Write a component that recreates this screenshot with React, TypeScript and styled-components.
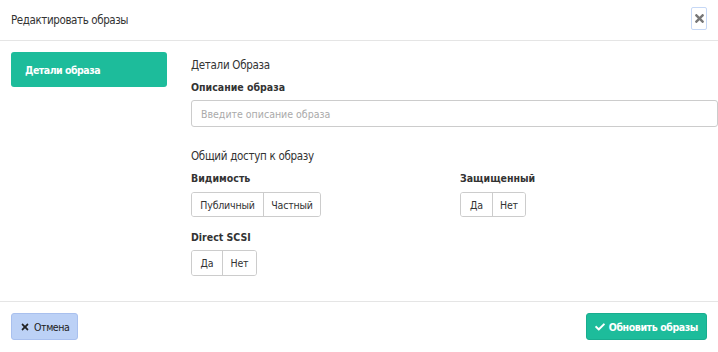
import React from "react";
import styled, { createGlobalStyle } from "styled-components";
import { FaTimes, FaCheck } from "react-icons/fa";

const GlobalStyle = createGlobalStyle`
    html, body {
        margin: 0;
        padding: 0;
        background: #ffffff;
    }
    body {
        font-family: "DejaVu Sans Condensed", "Liberation Sans Narrow", "Liberation Sans", sans-serif;
        color: #333;
    }
`;

const Modal = styled.div`
    width: 718px;
    height: 352px;
    display: flex;
    flex-direction: column;
    background: #fff;
    box-sizing: border-box;
`;

const Header = styled.div`
    height: 41px;
    box-sizing: border-box;
    border-bottom: 1px solid #e5e5e5;
    display: flex;
    align-items: center;
    justify-content: space-between;
    padding: 0 11px;
`;

const Title = styled.h4`
    margin: 0;
    font-size: 11.5px;
    letter-spacing: -0.4px;
    font-weight: normal;
    color: #333;
`;

const CloseButton = styled.button`
    width: 16px;
    height: 23px;
    margin-top: -3px;
    padding: 0;
    border: 1px solid #c6d8f6;
    border-radius: 2px;
    background: #fff;
    color: #777;
    display: flex;
    align-items: center;
    justify-content: center;
    font-size: 13px;
`;

const Body = styled.div`
    flex: 1;
    display: flex;
    gap: 24px;
    padding: 11px 0 0 11px;
`;

const TabList = styled.div`
    width: 156px;
    flex-shrink: 0;
`;

const Tab = styled.div<{ $active?: boolean }>`
    height: 35px;
    border-radius: 3px;
    background: ${(p) => (p.$active ? "#1dbc9b" : "transparent")};
    color: ${(p) => (p.$active ? "#fff" : "#333")};
    font-size: 10.5px;
    letter-spacing: -0.5px;
    font-weight: bold;
    display: flex;
    align-items: center;
    padding-left: 14px;
`;

const Content = styled.div`
    flex: 1;
    display: flex;
    flex-direction: column;
    padding-top: 5px;
`;

const SectionTitle = styled.div<{ $gap?: number }>`
    font-size: 11.5px;
    letter-spacing: -0.3px;
    line-height: 16px;
    margin-top: ${(p) => p.$gap ?? 0}px;
`;

const Label = styled.div<{ $gap?: number }>`
    font-size: 10.5px;
    font-weight: bold;
    line-height: 14px;
    margin-top: ${(p) => p.$gap ?? 7}px;
`;

const Input = styled.input`
    margin-top: 6px;
    height: 27px;
    box-sizing: border-box;
    width: 100%;
    border: 1px solid #ccc;
    border-radius: 3px;
    padding: 0 9px;
    font-family: inherit;
    font-size: 10.5px;
    color: #333;

    &::placeholder {
        color: #aaa;
    }
`;

const Row = styled.div`
    display: grid;
    grid-template-columns: 269px 1fr;
`;

const Field = styled.div`
    display: flex;
    flex-direction: column;
    align-items: flex-start;
`;

const Group = styled.div<{ $gap?: number; $h?: number }>`
    display: inline-flex;
    margin-top: ${(p) => p.$gap ?? 7}px;
    height: ${(p) => p.$h ?? 25}px;
    border: 1px solid #ccc;
    border-radius: 3px;
    box-sizing: border-box;
    overflow: hidden;
`;

const GroupButton = styled.button<{ $w: number }>`
    width: ${(p) => p.$w}px;
    border: none;
    background: #fff;
    font-family: inherit;
    font-size: 10.5px;
    letter-spacing: -0.2px;
    color: #333;
    padding: 0;

    & + & {
        border-left: 1px solid #ccc;
    }
`;

const Footer = styled.div`
    height: 51px;
    box-sizing: border-box;
    border-top: 1px solid #e5e5e5;
    display: flex;
    justify-content: space-between;
    align-items: flex-start;
    padding: 11px 11px 0 11px;
`;

const Button = styled.button<{ $variant: "cancel" | "primary" }>`
    height: 27px;
    box-sizing: border-box;
    border-radius: 3px;
    border: 1px solid
        ${(p) => (p.$variant === "primary" ? "#19ad8f" : "#a9c0ee")};
    background: ${(p) => (p.$variant === "primary" ? "#1dbc9b" : "#bcd1f6")};
    color: ${(p) => (p.$variant === "primary" ? "#fff" : "#222")};
    font-family: inherit;
    font-size: 10.5px;
    letter-spacing: -0.4px;
    font-weight: ${(p) => (p.$variant === "primary" ? "bold" : "normal")};
    display: inline-flex;
    align-items: center;
    gap: 4px;
    padding: 0 8px;

    svg {
        font-size: 10px;
    }
`;

const App: React.FC = () => {
    return (
        <>
            <GlobalStyle />
            <Modal>
                <Header>
                    <Title>Редактировать образы</Title>
                    <CloseButton aria-label="Закрыть">
                        <FaTimes />
                    </CloseButton>
                </Header>
                <Body>
                    <TabList>
                        <Tab $active>Детали образа</Tab>
                    </TabList>
                    <Content>
                        <SectionTitle>Детали Образа</SectionTitle>
                        <Label>Описание образа</Label>
                        <Input placeholder="Введите описание образа" />

                        <SectionTitle $gap={21}>Общий доступ к образу</SectionTitle>
                        <Row>
                            <Field>
                                <Label>Видимость</Label>
                                <Group>
                                    <GroupButton $w={71}>Публичный</GroupButton>
                                    <GroupButton $w={57}>Частный</GroupButton>
                                </Group>
                                <Label $gap={13}>Direct SCSI</Label>
                                <Group $gap={6} $h={26}>
                                    <GroupButton $w={30}>Да</GroupButton>
                                    <GroupButton $w={34}>Нет</GroupButton>
                                </Group>
                            </Field>
                            <Field>
                                <Label>Защищенный</Label>
                                <Group>
                                    <GroupButton $w={31}>Да</GroupButton>
                                    <GroupButton $w={33}>Нет</GroupButton>
                                </Group>
                            </Field>
                        </Row>
                    </Content>
                </Body>
                <Footer>
                    <Button $variant="cancel">
                        <FaTimes /> Отмена
                    </Button>
                    <Button $variant="primary">
                        <FaCheck /> Обновить образы
                    </Button>
                </Footer>
            </Modal>
        </>
    );
};

export default App;
